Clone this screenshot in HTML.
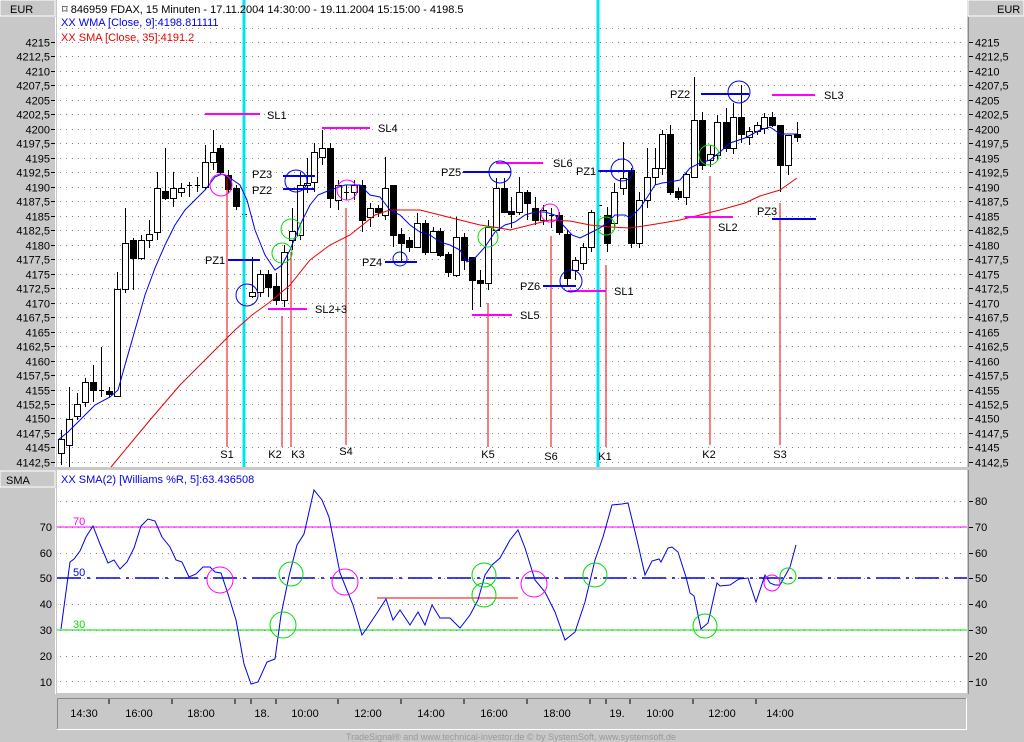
<!DOCTYPE html>
<html><head><meta charset="utf-8"><style>
body{margin:0;width:1024px;height:742px;background:#c8c8c8;overflow:hidden;font-family:"Liberation Sans",sans-serif}
svg{position:absolute;left:0;top:0}
text{font-family:"Liberation Sans",sans-serif;font-size:11px}
</style></head><body>
<svg id="s" width="1024" height="742" xmlns="http://www.w3.org/2000/svg">
<rect x="0" y="0" width="1024" height="742" fill="#c8c8c8"/>
<!-- panels -->
<rect x="57" y="0" width="910" height="467" fill="#fff"/>
<rect x="57" y="470" width="910" height="223" fill="#fff"/>
<rect x="0" y="0" width="55" height="16" fill="#c8c8c8" stroke="#fff" stroke-width="1"/>
<rect x="968" y="0" width="56" height="16" fill="#c8c8c8" stroke="#fff" stroke-width="1"/>
<rect x="0" y="471" width="55" height="16" fill="#c8c8c8" stroke="#fff" stroke-width="1"/>
<line x1="55.5" y1="17" x2="55.5" y2="467" stroke="#fff"/>
<line x1="55.5" y1="488" x2="55.5" y2="694" stroke="#fff"/>
<line x1="968.5" y1="17" x2="968.5" y2="467" stroke="#888"/>
<line x1="968.5" y1="470" x2="968.5" y2="694" stroke="#888"/>
<rect x="57.5" y="698.5" width="909" height="31" fill="#c8c8c8" stroke="#fff"/>
<line x1="57.5" y1="698.5" x2="966" y2="698.5" stroke="#888"/>
<line x1="57.5" y1="698.5" x2="57.5" y2="729" stroke="#888"/>
<text x="10" y="13">EUR</text><text x="997" y="13">EUR</text><text x="6" y="484">SMA</text>
<g id="grid"></g>
<g id="cand"></g>
<!-- cyan lines -->
<line x1="244" y1="0" x2="244" y2="467" stroke="#00e5ee" stroke-width="3"/>
<line x1="598" y1="0" x2="598" y2="467" stroke="#00e5ee" stroke-width="3"/>
<!-- SMA red / WMA blue -->
<polyline fill="none" stroke="#e00" stroke-width="1" points="111,467 150,420 180,385 210,355 235,330 252,315 270,302 290,285 310,260 330,245 350,235 360,227 375,215 390,210 420,210 440,215 460,220 480,225 500,228 510,230 530,225 550,220 570,221 590,225 610,227 630,228 650,225 680,220 700,215 720,210 745,203 760,196 780,190 797,178"/>
<polyline fill="none" stroke="#0000ee" stroke-width="1" points="58,440 68,432 80,420 95,405 110,397 118,390 125,365 135,330 145,295 155,268 165,245 175,225 185,210 195,200 205,190 215,177 222,174 230,178 240,185 247,200 255,230 265,255 275,270 282,265 290,250 300,225 310,205 318,195 330,190 345,185 360,185 370,195 380,197 390,210 400,215 410,225 420,232 430,235 440,242 450,245 460,250 467,262 475,258 485,247 495,232 505,225 515,222 525,215 535,212 545,212 555,215 563,225 572,235 580,238 590,233 600,228 608,222 615,215 625,215 630,218 640,208 648,196 655,185 662,183 670,182 680,180 690,168 700,163 710,160 720,152 730,143 745,138 760,130 770,127 780,134 797,134"/>
<!-- red verticals -->
<g stroke="#e00" stroke-width="1">
<line x1="227" y1="178" x2="227" y2="447"/><line x1="282" y1="316" x2="282" y2="447"/><line x1="291" y1="252" x2="291" y2="447"/><line x1="346" y1="208" x2="346" y2="445"/><line x1="488" y1="303" x2="488" y2="447"/><line x1="551" y1="236" x2="551" y2="447"/><line x1="606" y1="265" x2="606" y2="447"/><line x1="710" y1="176" x2="710" y2="445"/><line x1="780" y1="203" x2="780" y2="445"/>
</g>
<g text-anchor="middle"><text x="227" y="458">S1</text><text x="275" y="458">K2</text><text x="298" y="458">K3</text><text x="346" y="455">S4</text><text x="488" y="458">K5</text><text x="551" y="460">S6</text><text x="605" y="460">K1</text><text x="709" y="458">K2</text><text x="780" y="458">S3</text></g>
<!-- magenta SL -->
<g stroke="#f0f" stroke-width="2">
<line x1="205" y1="114" x2="260" y2="114"/><line x1="322" y1="128" x2="370" y2="128"/><line x1="268" y1="309" x2="307" y2="309"/><line x1="496" y1="163" x2="543" y2="163"/><line x1="472" y1="315" x2="512" y2="315"/><line x1="568" y1="291" x2="606" y2="291"/><line x1="685" y1="217" x2="733" y2="217"/><line x1="772" y1="95" x2="815" y2="95"/>
</g>
<text x="267" y="119">SL1</text><text x="378" y="132">SL4</text><text x="315" y="313">SL2+3</text><text x="553" y="167">SL6</text><text x="520" y="319">SL5</text><text x="614" y="295">SL1</text><text x="718" y="231">SL2</text><text x="824" y="99">SL3</text>
<!-- blue PZ -->
<g stroke="#0000ee" stroke-width="2">
<line x1="228" y1="260" x2="260" y2="260"/><line x1="283" y1="176" x2="315" y2="176"/><line x1="283" y1="189" x2="315" y2="189"/><line x1="385" y1="262" x2="417" y2="262"/><line x1="463" y1="172" x2="511" y2="172"/><line x1="543" y1="286" x2="576" y2="286"/><line x1="598" y1="171" x2="631" y2="171"/><line x1="701" y1="94" x2="749" y2="94"/><line x1="772" y1="219" x2="816" y2="219"/>
</g>
<text x="205" y="264">PZ1</text><text x="252" y="178">PZ3</text><text x="252" y="194">PZ2</text><text x="362" y="266">PZ4</text><text x="441" y="176">PZ5</text><text x="520" y="290">PZ6</text><text x="576" y="175">PZ1</text><text x="670" y="98">PZ2</text><text x="757" y="215">PZ3</text>
<g fill="none" stroke-width="1">
<g stroke="#0000ee"><circle cx="247" cy="295" r="11"/><circle cx="296" cy="181" r="11"/><circle cx="400" cy="259" r="7"/><circle cx="500" cy="172" r="11"/><circle cx="571" cy="281" r="11"/><circle cx="622" cy="170" r="11"/><circle cx="739" cy="92" r="11"/></g>
<g stroke="#f0f"><circle cx="221" cy="185" r="11"/><circle cx="347" cy="190" r="10"/><circle cx="550" cy="213" r="9"/></g>
<g stroke="#0d0"><circle cx="282" cy="253" r="10"/><circle cx="291" cy="229" r="10"/><circle cx="488" cy="237" r="10"/><circle cx="606" cy="226" r="9"/><circle cx="709" cy="155" r="10"/></g>
</g>
<text x="62" y="13">⌑ 846959  FDAX, 15 Minuten - 17.11.2004 14:30:00 - 19.11.2004 15:15:00 - 4198.5</text>
<text x="61" y="26" fill="#0000ee">XX WMA [Close, 9]:4198.811111</text>
<text x="61" y="41" fill="#e00">XX SMA [Close, 35]:4191.2</text>
<!-- lower panel -->
<line x1="57" y1="527" x2="967" y2="527" stroke="#f0f"/>
<line x1="57" y1="630" x2="967" y2="630" stroke="#0d0"/>
<line x1="57" y1="578" x2="967" y2="578" stroke="#0000ee" stroke-width="1.5" stroke-dasharray="24,6,3,6"/>
<text x="73" y="525" fill="#f0f">70</text><text x="73" y="576" fill="#0000ee">50</text><text x="73" y="628" fill="#0d0">30</text>
<line x1="377" y1="598" x2="518" y2="598" stroke="#e00"/>
<polyline fill="none" stroke="#0000ee" points="61,629 70,562 74,559 80,551 86,537 93,526 100,544 108,563 114,560 120,569 127,562 134,548 141,526 148,519 155,521 162,537 170,547 176,560 182,562 189,577 196,574 203,567 210,567 215,572 221,573 228,594 236,620 244,664 251,684 258,682 267,662 275,659 281,615 289,576 297,545 304,534 314,490 322,500 329,517 340,573 353,605 362,635 367,628 377,613 386,599 393,620 400,610 410,625 418,612 425,625 432,605 440,618 450,618 460,628 470,615 478,600 485,575 492,565 500,558 510,540 518,530 525,548 535,580 545,592 555,612 565,640 575,632 585,602 595,560 603,537 612,505 622,504 628,503 637,540 645,575 652,561 659,559 661,562 668,548 672,547 678,552 686,577 690,593 694,596 701,629 708,623 717,583 720,586 730,585 739,579 748,578 756,602 765,575 770,583 775,585 780,585 790,567 796,545"/>
<g fill="none"><g stroke="#f0f"><circle cx="220" cy="580" r="13"/><circle cx="345" cy="582" r="13"/><circle cx="534" cy="584" r="13"/><circle cx="772" cy="583" r="8"/></g>
<g stroke="#0d0"><circle cx="291" cy="574" r="12"/><circle cx="283" cy="625" r="13"/><circle cx="484" cy="575" r="12"/><circle cx="484" cy="595" r="12"/><circle cx="595" cy="575" r="12"/><circle cx="705" cy="626" r="12"/><circle cx="788" cy="576" r="8"/></g></g>
<text x="61" y="483" fill="#0000ee">XX SMA(2) [Williams %R, 5]:63.436508</text>
<g text-anchor="end"><text x="52" y="531">70</text><text x="52" y="557">60</text><text x="52" y="582">50</text><text x="52" y="608">40</text><text x="52" y="634">30</text><text x="52" y="660">20</text><text x="52" y="686">10</text></g>
<g><text x="975" y="505">80</text><text x="975" y="531">70</text><text x="975" y="557">60</text><text x="975" y="582">50</text><text x="975" y="608">40</text><text x="975" y="634">30</text><text x="975" y="660">20</text><text x="975" y="686">10</text></g>
<!-- time axis -->
<g stroke="#000"><line x1="109" y1="699" x2="109" y2="704"/><line x1="172" y1="699" x2="172" y2="704"/><line x1="235" y1="699" x2="235" y2="704"/><line x1="251" y1="699" x2="251" y2="704"/><line x1="276" y1="699" x2="276" y2="704"/><line x1="338" y1="699" x2="338" y2="704"/><line x1="401" y1="699" x2="401" y2="704"/><line x1="464" y1="699" x2="464" y2="704"/><line x1="527" y1="699" x2="527" y2="704"/><line x1="590" y1="699" x2="590" y2="704"/><line x1="606" y1="699" x2="606" y2="704"/><line x1="630" y1="699" x2="630" y2="704"/><line x1="693" y1="699" x2="693" y2="704"/><line x1="756" y1="699" x2="756" y2="704"/></g>
<g text-anchor="middle" font-size="11"><text x="84" y="717">14:30</text><text x="139" y="717">16:00</text><text x="201" y="717">18:00</text><text x="262" y="717">18.</text><text x="305" y="717">10:00</text><text x="368" y="717">12:00</text><text x="431" y="717">14:00</text><text x="494" y="717">16:00</text><text x="557" y="717">18:00</text><text x="617" y="717">19.</text><text x="660" y="717">10:00</text><text x="722" y="717">12:00</text><text x="780" y="717">14:00</text></g>
<text x="511" y="740" text-anchor="middle" fill="#999" style="font-size:9px">TradeSignal® and www.technical-investor.de © by  SystemSoft, www.systemsoft.de</text>
</svg>
<script>
var NS="http://www.w3.org/2000/svg",g=document.getElementById('grid'),h='';
var labs=["4215","4212,5","4210","4207,5","4205","4202,5","4200","4197,5","4195","4192,5","4190","4187,5","4185","4182,5","4180","4177,5","4175","4172,5","4170","4167,5","4165","4162,5","4160","4157,5","4155","4152,5","4150","4147,5","4145","4142,5"];
for(var i=-1;i<30;i++){var y=Math.round(42+i*14.48)+.5;h+='<line x1="60" y1="'+y+'" x2="965" y2="'+y+'" stroke="#888" stroke-dasharray="1,5"/>';
 if(i>=0){h+='<text x="50" y="'+(y+4)+'" text-anchor="end">'+labs[i]+'</text><line x1="51" y1="'+y+'" x2="55" y2="'+y+'" stroke="#000"/>';
 h+='<text x="975" y="'+(y+4)+'">'+labs[i]+'</text><line x1="969" y1="'+y+'" x2="973" y2="'+y+'" stroke="#000"/>';}}
var ly=[501,527,553,578,604,630,656,681];
for(var j=0;j<ly.length;j++){var y=ly[j]+.5;h+='<line x1="60" y1="'+y+'" x2="965" y2="'+y+'" stroke="#888" stroke-dasharray="1,5"/><line x1="969" y1="'+y+'" x2="973" y2="'+y+'" stroke="#000"/>';}
g.innerHTML=h;
var C=[[61,439,453,430,465,0],[69,419,445,387,467,0],[77,404,416,393,420,0],[85,382,402,378,407,0],[93,382,390,365,402,1],[101,390,390,347,397,0],[109,391,394,387,397,1],[117,289,396,272,397,0],[125,243,289,208,293,0],[133,240,258,238,290,1],[141,240,258,235,260,0],[149,234,240,220,248,0],[157,188,232,172,240,0],[165,191,198,148,200,1],[173,188,198,172,207,0],[181,188,192,183,197,0],[189,185,185,182,197,0],[197,185,185,177,192,0],[205,162,187,145,190,0],[213,152,162,130,170,0],[220,148,172,145,175,1],[228,175,189,170,193,1],[236,188,206,185,210,1],[244,214,214,214,214,0],[252,292,296,257,298,0],[260,274,292,270,297,0],[268,274,287,270,297,1],[276,286,300,273,305,1],[284,252,300,245,307,0],[292,231,240,208,250,0],[300,185,235,172,240,0],[307,183,185,158,193,0],[314,152,182,143,192,0],[322,148,157,130,165,0],[330,148,198,143,208,1],[338,185,200,180,210,0],[346,192,192,185,200,0],[354,185,192,180,200,0],[362,185,220,180,232,1],[370,208,217,203,227,0],[378,208,212,205,217,1],[385,188,215,157,220,0],[393,185,235,185,247,1],[401,234,243,228,262,1],[409,240,247,237,252,1],[417,223,247,213,248,0],[425,223,252,220,255,1],[433,231,252,227,253,0],[440,231,255,228,257,1],[448,254,272,252,277,1],[456,237,275,217,277,0],[464,237,260,233,270,1],[472,257,280,257,310,1],[480,280,283,270,307,1],[488,227,283,220,290,0],[496,188,230,178,233,0],[504,188,212,178,213,1],[511,211,214,197,228,1],[519,192,212,177,215,0],[527,192,203,190,220,1],[535,208,220,197,225,1],[543,210,220,205,225,0],[551,215,215,208,228,0],[559,215,232,212,235,1],[567,234,278,230,287,1],[575,260,270,257,280,0],[583,247,263,243,270,0],[591,212,247,210,252,0],[599,205,205,205,205,0],[607,215,243,207,252,1],[614,192,223,183,230,0],[623,178,188,142,195,0],[631,170,243,168,248,1],[639,200,243,192,248,0],[647,177,200,148,208,0],[655,168,177,148,185,0],[662,134,168,130,175,0],[670,134,192,125,195,1],[678,191,197,188,200,1],[686,174,197,172,205,0],[694,120,177,77,177,0],[702,120,165,112,170,1],[710,154,160,145,167,0],[717,122,155,115,160,0],[726,122,148,108,152,1],[733,117,148,103,154,0],[741,117,134,85,143,1],[749,131,137,127,145,0],[757,125,131,122,135,0],[764,117,128,113,134,0],[772,117,125,112,127,1],[780,125,165,125,192,1],[788,135,165,135,175,0],[797,134,137,122,142,1]];
var s='';C.forEach(function(c){var x=c[0]+.5;s+='<line x1="'+x+'" y1="'+c[3]+'" x2="'+x+'" y2="'+c[4]+'" stroke="#000"/>';
var hgt=c[2]-c[1];if(hgt<1){s+='<line x1="'+(c[0]-2)+'" y1="'+(c[1]+.5)+'" x2="'+(c[0]+3)+'" y2="'+(c[1]+.5)+'" stroke="#000"/>';}
else s+='<rect x="'+(c[0]-2.5)+'" y="'+(c[1]+.5)+'" width="6" height="'+hgt+'" fill="'+(c[5]?'#000':'#fff')+'" stroke="#000"/>';});
document.getElementById('cand').innerHTML=s;
</script>
</body></html>
